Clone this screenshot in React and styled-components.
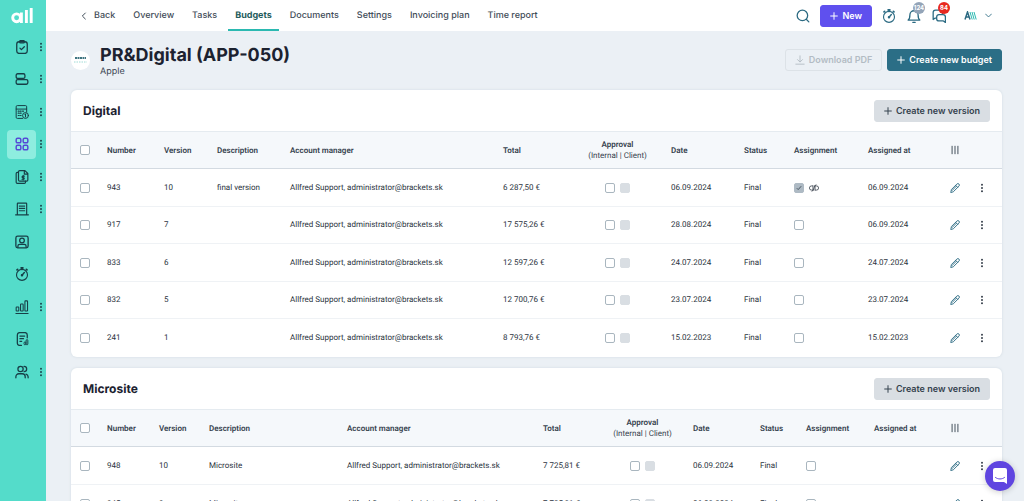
import React from 'react';
import styled, { createGlobalStyle } from 'styled-components';

const GlobalStyle = createGlobalStyle`
  * { box-sizing: border-box; }
  body {
    margin: 0;
    background: #ebf0f5;
    color: #2b3440;
    font-family: Inter, 'Liberation Sans', sans-serif;
    font-size: 8px;
    line-height: 12px;
    text-rendering: geometricPrecision;
  }
  button, input { font-family: inherit; margin: 0; }
  svg { display: block; }
`;

const Shell = styled.div`
  display: flex;
  height: 100vh;
  overflow: hidden;
`;

const Sidebar = styled.aside`
  flex: none;
  width: 46px;
  background: #54dcca;
  display: flex;
  flex-direction: column;
`;

const Brand = styled.a`
  display: flex;
  justify-content: center;
  flex: none;
  height: 30px;
  padding-top: 7px;
  padding-right: 3px;
`;

const SideRow = styled.div`
  display: flex;
  align-items: center;
  justify-content: space-between;
  flex: none;
  padding-left: 7px;
  height: ${p => (p.$short ? 32 : 33)}px;
`;

const SideLink = styled.a`
  display: flex;
  align-items: center;
  justify-content: center;
  width: 29px;
  height: 29px;
  border-radius: 4px;
  color: ${p => (p.$active ? '#5549d6' : '#173f47')};
  background: ${p => (p.$active ? '#8eeddf' : 'transparent')};
`;

const DotsButton = styled.button`
  display: flex;
  align-items: center;
  justify-content: center;
  width: ${p => p.$width || 10}px;
  height: 16px;
  padding: 0;
  border: 0;
  background: none;
  color: ${p => p.$color || '#173f47'};
`;

const Column = styled.div`
  flex: 1;
  min-width: 0;
  display: flex;
  flex-direction: column;
`;

const TopBar = styled.header`
  flex: none;
  display: flex;
  justify-content: space-between;
  height: 31px;
  padding: 0 32px 0 27px;
  background: #fff;
`;

const Tabs = styled.nav`
  display: flex;
  gap: 4px;
`;

const Tab = styled.a`
  display: flex;
  align-items: center;
  gap: 6px;
  padding: 2px 7px 0;
  border-bottom: 2px solid ${p => (p.$active ? '#2bb9b1' : 'transparent')};
  border-radius: 2px 2px 0 0;
  color: ${p => (p.$active ? '#1f5c5c' : '#3f4c58')};
  font-size: 9px;
  font-weight: ${p => (p.$active ? 700 : 500)};
  text-decoration: none;
  white-space: nowrap;
`;

const Tools = styled.div`
  display: flex;
  align-items: center;
  color: #2b6a82;
`;

const IconButton = styled.button`
  position: relative;
  display: flex;
  padding: 0;
  margin-left: ${p => p.$gap || 0}px;
  border: 0;
  background: none;
  color: inherit;
`;

const Badge = styled.span`
  position: absolute;
  top: -7px;
  left: 6px;
  min-width: 12px;
  height: 12px;
  border-radius: 6px;
  background: ${p => p.$color};
  color: #fff;
  font-size: 6px;
  font-weight: 700;
  line-height: 12px;
  text-align: center;
`;

const looks = {
  primary: 'background: #5f50ee; color: #fff; border-color: #5f50ee;',
  teal: 'background: #2b6e86; color: #fff; border-color: #2b6e86;',
  grey: 'background: #d9dee3; color: #35424e; border-color: #d9dee3;',
  ghost: 'background: transparent; color: #b3bcc4; border-color: #dce2e7;',
};

const Button = styled.button`
  display: flex;
  align-items: center;
  gap: 4px;
  height: 22px;
  padding: 0 9px;
  border: 1px solid;
  border-radius: 3px;
  font-size: 9px;
  font-weight: 600;
  line-height: 12px;
  white-space: nowrap;
  ${p => looks[p.$look]}
`;

const Main = styled.main`
  flex: 1;
  min-height: 0;
  overflow: auto;
  scrollbar-width: none;
  padding: 13px 22px 14px 25px;
`;

const PageHead = styled.div`
  display: flex;
  align-items: center;
  height: 32px;
  margin-bottom: 14px;
`;

const Avatar = styled.div`
  display: flex;
  align-items: center;
  justify-content: center;
  width: 19px;
  height: 19px;
  margin-right: 10px;
  border-radius: 50%;
  background: #fff;
`;

const Titles = styled.div`
  flex: 1;
  padding-top: 4px;
`;

const Title = styled.h1`
  margin: 0;
  color: #1c2230;
  font-size: 18px;
  font-weight: 700;
  line-height: 20px;
`;

const Client = styled.p`
  margin: 0;
  color: #3b4652;
  font-size: 9px;
  line-height: 12px;
`;

const Actions = styled.div`
  display: flex;
  gap: 5px;
`;

const Card = styled.section`
  margin-bottom: 11px;
  border-radius: 6px;
  background: #fff;
  box-shadow: 0 0 2px 1px #dfe6ec;
  overflow: hidden;
`;

const CardHead = styled.div`
  display: flex;
  align-items: center;
  justify-content: space-between;
  height: 42px;
  padding: 0 12px;
  border-bottom: 1px solid #e5ebf0;
`;

const CardTitle = styled.h2`
  margin: 0;
  color: #1c2230;
  font-size: 12px;
  font-weight: 700;
  line-height: 16px;
`;

const Table = styled.table`
  width: 100%;
  table-layout: fixed;
  border-collapse: separate;
  border-spacing: 0;
  font-family: Roboto, Inter, sans-serif;
`;

const HeadCell = styled.th`
  height: 37px;
  padding: 0 0 0 ${p => p.$pad || 0}px;
  border-bottom: 1px solid #d3dae1;
  background: #f5f8fb;
  color: #35424e;
  font-weight: 600;
  font-size: 8px;
  line-height: 11px;
  text-align: ${p => (p.$center ? 'center' : 'left')};
  white-space: nowrap;

  small {
    display: block;
    font-size: 8px;
    font-weight: 400;
  }
`;

const Row = styled.tr`
  height: 38px;

  &:nth-child(even) { height: 37px; }
  &:last-child td { border-bottom: 0; }
`;

const Cell = styled.td`
  padding: 0 0 0 ${p => p.$pad || 0}px;
  border-bottom: 1px solid #eff2f5;
  font-size: 8px;
  white-space: nowrap;
`;

const Inline = styled.div`
  display: flex;
  align-items: center;
  justify-content: ${p => (p.$center ? 'center' : 'flex-start')};
  gap: 5px;
`;

const Check = styled.input.attrs({ type: 'checkbox' })`
  appearance: none;
  display: block;
  width: 10px;
  height: 10px;
  border: 1px solid #a9b6bf;
  border-radius: 2px;
  background: #fff;

  &:disabled {
    border-color: #d9dee3;
    background: #d9dee3;
  }

  &:checked {
    border-color: #aebac4;
    background: #aebac4 url("data:image/svg+xml,%3Csvg xmlns='http://www.w3.org/2000/svg' viewBox='0 0 10 10' fill='none' stroke='%234a5763'%3E%3Cpath d='M2.8 5.2l1.4 1.4 3-3.4'/%3E%3C/svg%3E") center / 10px;
  }
`;

const Chat = styled.button`
  position: fixed;
  right: 9px;
  bottom: 10px;
  display: flex;
  align-items: center;
  justify-content: center;
  width: 30px;
  height: 30px;
  padding: 0;
  border: 0;
  border-radius: 50%;
  background: #5f45e0;
  box-shadow: 0 1px 6px rgba(0, 0, 0, 0.2);
`;

const Icon = ({ size = 14, box = 24, width = 2.2, children }) => (
  <svg
    width={size}
    height={size}
    viewBox={`0 0 ${box} ${box}`}
    fill="none"
    stroke="currentColor"
    strokeWidth={width}
    strokeLinecap="round"
    strokeLinejoin="round"
    aria-hidden="true"
  >
    {children}
  </svg>
);

const Plus = () => <Icon size={8} width={3}><path d="M12 2v20M2 12h20" /></Icon>;

const Dots = () => (
  <svg width="4" height="10" viewBox="0 0 4 10" fill="currentColor" aria-hidden="true">
    <circle cx="2" cy="1.8" r="0.95" />
    <circle cx="2" cy="5" r="0.95" />
    <circle cx="2" cy="8.2" r="0.95" />
  </svg>
);

const Stopwatch = ({ size }) => (
  <Icon size={size} width={1.9}>
    <circle cx="12" cy="13.5" r="9.4" />
    <path d="M12 14l4-4.5" strokeWidth="2.4" />
    <path d="M10.500 1.500h3M12 2v2M3.500 5l1-1M20.500 5l-1-1" strokeWidth="3" />
    <circle cx="12" cy="14" r="1.200" fill="currentColor" />
  </Icon>
);

const Pencil = () => (
  <Icon size={10}>
    <path d="M2 22l1.500-6.500L16.500 2.500a3 3 0 0 1 5 5L8.500 20.500zM13.500 5.500l5 5M5 18L15 8" />
  </Icon>
);

const sideItems = [
  {
    label: 'Tasks', menu: true,
    icon: <Icon>
      <rect x="3" y="3" width="18" height="20" rx="4" />
      <rect x="8" y="1" width="8" height="4" rx="1.5" />
      <path d="M8.500 14l2.500 2.500 5-5" />
    </Icon>,
  },
  {
    label: 'Planning', menu: true,
    icon: <Icon>
      <rect x="2" y="3" width="15" height="8" rx="2.5" />
      <rect x="2" y="13" width="20" height="8" rx="2.5" />
    </Icon>,
  },
  {
    label: 'Calculations', menu: true,
    icon: <Icon width={1.7}>
      <path d="M13 23H4a2 2 0 0 1-2-2V3a2 2 0 0 1 2-2h14a2 2 0 0 1 2 2v9M2 7h18" />
      <path d="M5.500 10.500h1.500M9 10.500h1.500M13 10.500h1.500M5.500 14h1.500M9 14h1.500M5.500 18h1.500M9 18h1.500" strokeWidth="2" />
      <circle cx="18" cy="18" r="5" />
      <path d="M18 15.500v5M17 16.500l1-1" />
    </Icon>,
  },
  {
    label: 'Projects', menu: true, active: true,
    icon: <Icon width={2.5}>
      <rect x="2" y="2" width="8" height="8" rx="2.5" />
      <rect x="14" y="2" width="8" height="8" rx="2.5" />
      <rect x="2" y="14" width="8" height="8" rx="2.5" />
      <rect x="14" y="14" width="8" height="8" rx="2.5" />
    </Icon>,
  },
  {
    label: 'Invoices', menu: true,
    icon: <Icon width={2}>
      <path d="M8 1h9l5 5v11a2 2 0 0 1-2 2H8a2 2 0 0 1-2-2V3a2 2 0 0 1 2-2zM16 1v6h6" />
      <path d="M6 4H4a2 2 0 0 0-2 2v15a2 2 0 0 0 2 2h12a2 2 0 0 0 2-2v-2" />
      <path d="M16 10.500h-2.500a1.300 1.300 0 0 0 0 2.700h1a1.300 1.300 0 0 1 0 2.700H12M14 9v8" />
    </Icon>,
  },
  {
    label: 'Companies', menu: true,
    icon: <Icon width={2}>
      <path d="M4 22V3a1 1 0 0 1 1-1h14a1 1 0 0 1 1 1v19M1 22h22" />
      <path d="M7.500 7h2M14.500 7h2M7.500 11h2M14.500 11h2M7.500 15h2M14.500 15h2M11 7h2M11 11h2M11 15h2" />
    </Icon>,
  },
  {
    label: 'Contacts',
    icon: <Icon>
      <rect x="1.5" y="2" width="21" height="20" rx="3" />
      <circle cx="12" cy="9.5" r="4" />
      <path d="M5 21v-2a3 3 0 0 1 3-3h8a3 3 0 0 1 3 3v2" />
    </Icon>,
  },
  { label: 'Time tracking', icon: <Stopwatch /> },
  {
    label: 'Statistics', menu: true,
    icon: <Icon width={1.8}>
      <rect x="2" y="12" width="4.5" height="7" rx="1" />
      <rect x="9.5" y="7" width="4.5" height="12" rx="1" />
      <rect x="17" y="1.5" width="4.5" height="17.5" rx="1" />
      <path d="M1.500 23h21" />
    </Icon>,
  },
  {
    label: 'Reports',
    icon: <Icon>
      <path d="M11 23H7a4 4 0 0 1-3-4V5a4 4 0 0 1 4-4h9a4 4 0 0 1 4 4v5M8.500 7h8M8.500 11.500h6M8.500 16h3" />
      <path d="M15.500 18.500a1.500 1.500 0 0 1 3 0v2a1.500 1.500 0 0 1-3 0zM19 14.500a1.500 1.500 0 0 1 3 0v6a1.500 1.500 0 0 1-3 0z" strokeWidth="1.7" />
    </Icon>,
  },
  {
    label: 'People', menu: true,
    icon: <Icon>
      <circle cx="9.5" cy="7" r="4.5" />
      <path d="M1.500 22v-2a5 5 0 0 1 5-5h6a5 5 0 0 1 5 5v2M15.500 2.500a4.500 4.500 0 0 1 0 9M19 15.500a5 5 0 0 1 3.500 4.500v2" />
    </Icon>,
  },
];

const tabs = ['Overview', 'Tasks', 'Budgets', 'Documents', 'Settings', 'Invoicing plan', 'Time report'];

const MANAGER = 'Allfred Support, administrator@brackets.sk';

const budgets = [
  {
    name: 'Digital',
    cols: [36, 57, 53, 73, 213, 61, 107, 73, 50, 74, 82, 30, 22],
    rows: [
      { number: 943, version: 10, description: 'final version', total: '6 287,50 €', date: '06.09.2024', assigned: true, assignedAt: '06.09.2024' },
      { number: 917, version: 7, total: '17 575,26 €', date: '28.08.2024', assignedAt: '06.09.2024' },
      { number: 833, version: 6, total: '12 597,26 €', date: '24.07.2024', assignedAt: '24.07.2024' },
      { number: 832, version: 5, total: '12 700,76 €', date: '23.07.2024', assignedAt: '23.07.2024' },
      { number: 241, version: 1, total: '8 793,76 €', date: '15.02.2023', assignedAt: '15.02.2023' },
    ],
  },
  {
    name: 'Microsite',
    cols: [36, 52, 50, 138, 196, 49, 101, 67, 46, 68, 76, 30, 22],
    rows: [
      { number: 948, version: 10, description: 'Microsite', total: '7 725,81 €', date: '06.09.2024' },
      { number: 945, version: 9, description: 'Microsite', total: '7 725,81 €', date: '06.09.2024' },
    ],
  },
];

function BudgetCard({ budget }) {
  return (
    <Card>
      <CardHead>
        <CardTitle>{budget.name}</CardTitle>
        <Button $look="grey"><Plus />Create new version</Button>
      </CardHead>
      <Table>
        <colgroup>
          {budget.cols.map((w, i) => <col key={i} width={w} />)}
        </colgroup>
        <thead>
          <tr>
            <HeadCell $pad={9}><Check aria-label="Select all" /></HeadCell>
            <HeadCell>Number</HeadCell>
            <HeadCell>Version</HeadCell>
            <HeadCell>Description</HeadCell>
            <HeadCell>Account manager</HeadCell>
            <HeadCell>Total</HeadCell>
            <HeadCell $center>Approval<small>(Internal | Client)</small></HeadCell>
            <HeadCell>Date</HeadCell>
            <HeadCell>Status</HeadCell>
            <HeadCell>Assignment</HeadCell>
            <HeadCell>Assigned at</HeadCell>
            <HeadCell>
              <IconButton aria-label="Columns">
                <Icon size={10}><path d="M5 3v18M12 3v18M19 3v18" /></Icon>
              </IconButton>
            </HeadCell>
            <HeadCell />
          </tr>
        </thead>
        <tbody>
          {budget.rows.map(row => (
            <Row key={row.number}>
              <Cell $pad={9}><Check aria-label={`Select ${row.number}`} /></Cell>
              <Cell>{row.number}</Cell>
              <Cell>{row.version}</Cell>
              <Cell>{row.description}</Cell>
              <Cell>{MANAGER}</Cell>
              <Cell>{row.total}</Cell>
              <Cell>
                <Inline $center>
                  <Check aria-label="Internal approval" />
                  <Check aria-label="Client approval" disabled />
                </Inline>
              </Cell>
              <Cell>{row.date}</Cell>
              <Cell>Final</Cell>
              <Cell>
                <Inline>
                  <Check aria-label="Assignment" defaultChecked={row.assigned} />
                  {row.assigned && (
                    <Icon size={10} width={1.8}>
                      <path d="M9 7H6a4 4 0 0 0 0 10h2.500M9.500 7v8a6 6 0 0 1-2 5M15 17h3a4 4 0 0 0 0-10h-2.500M14.500 17v-8a6 6 0 0 1 2-5M10 18l4-12" />
                    </Icon>
                  )}
                </Inline>
              </Cell>
              <Cell>{row.assignedAt}</Cell>
              <Cell>
                <Tools><IconButton aria-label="Edit"><Pencil /></IconButton></Tools>
              </Cell>
              <Cell><DotsButton $width={4} $color="#2b3440" aria-label="More"><Dots /></DotsButton></Cell>
            </Row>
          ))}
        </tbody>
      </Table>
    </Card>
  );
}

function App() {
  return (
    <>
      <GlobalStyle />
      <Shell>
        <Sidebar>
          <Brand href="#" aria-label="all">
            <svg width="22" height="17" viewBox="0 0 22 17" fill="none" stroke="#fff" strokeWidth="2.9">
              <circle cx="5.600" cy="10.800" r="3.9" />
              <path d="M10.400 5.500v10.500M15.400 3v13M20.200 1v15" />
            </svg>
          </Brand>
          {sideItems.map((item, i) => (
            <SideRow key={item.label} $short={i % 2 === 1}>
              <SideLink href="#" aria-label={item.label} $active={item.active}>{item.icon}</SideLink>
              {item.menu && <DotsButton aria-label={`${item.label} menu`}><Dots /></DotsButton>}
            </SideRow>
          ))}
        </Sidebar>
        <Column>
          <TopBar>
            <Tabs>
              <Tab href="#"><Icon size={8} width={3}><path d="M16 3l-9 9 9 9" /></Icon>Back</Tab>
              {tabs.map(t => <Tab key={t} href="#" $active={t === 'Budgets'}>{t}</Tab>)}
            </Tabs>
            <Tools>
              <IconButton aria-label="Search">
                <Icon><circle cx="11" cy="11" r="9" /><path d="M18 18l4 4" /></Icon>
              </IconButton>
              <IconButton as="div" $gap={10}>
                <Button $look="primary"><Plus />New</Button>
              </IconButton>
              <IconButton $gap={10} aria-label="Timer"><Stopwatch size={14} /></IconButton>
              <IconButton $gap={11} aria-label="Notifications">
                <Icon><path d="M2 19h20c-3-2-3-5-3-9a7 7 0 0 0-14 0c0 4 0 7-3 9zM10 23h4" /></Icon>
                <Badge $color="#93a4b8">124</Badge>
              </IconButton>
              <IconButton $gap={11} aria-label="Messages">
                <Icon>
                  <path d="M7 15.500H5.500L2 18V6a4 4 0 0 1 4-4h8a4 4 0 0 1 4 4v2" />
                  <path d="M12 9.500h7a4 4 0 0 1 4 4V23l-3.500-2.500H12a4 4 0 0 1-4-4v-3a4 4 0 0 1 4-4z" />
                </Icon>
                <Badge $color="#e8291f">84</Badge>
              </IconButton>
              <IconButton $gap={18} aria-label="Account">
                <svg width="13" height="9" viewBox="0 0 13 9" fill="none">
                  <path d="M1 8.500L3.500 1l2.500 7.500M1.800 6h3.600" stroke="#2b6a82" strokeWidth="1.5" />
                  <path d="M6 1l2.200 7.500M8 1l2.200 7.500M10 1l2.200 7.500" stroke="#2bb9b1" strokeWidth="1" />
                </svg>
              </IconButton>
              <IconButton $gap={8} aria-label="Account menu">
                <Icon size={7} width={3}><path d="M2 7l10 10L22 7" /></Icon>
              </IconButton>
            </Tools>
          </TopBar>
          <Main>
            <PageHead>
              <Avatar>
                <svg width="13" height="8" viewBox="0 0 13 8" fill="none">
                  <path d="M1 2h11" stroke="#3f7480" strokeWidth="2" strokeDasharray="2 0.5" />
                  <path d="M0 6h13" stroke="#9edbd6" strokeDasharray="1.5 1" />
                </svg>
              </Avatar>
              <Titles>
                <Title>PR&amp;Digital (APP-050)</Title>
                <Client>Apple</Client>
              </Titles>
              <Actions>
                <Button $look="ghost" disabled>
                  <Icon size={10}><path d="M12 2v14M6 11l6 6 6-6M2 22h20" /></Icon>
                  Download PDF
                </Button>
                <Button $look="teal"><Plus />Create new budget</Button>
              </Actions>
            </PageHead>
            {budgets.map(b => <BudgetCard key={b.name} budget={b} />)}
          </Main>
        </Column>
      </Shell>
      <Chat aria-label="Open chat">
        <svg width="14" height="16" viewBox="0 0 14 16" fill="none">
          <path d="M2 0h10a2 2 0 0 1 2 2v14l-3-2H2a2 2 0 0 1-2-2V2a2 2 0 0 1 2-2z" fill="#fff" />
          <path d="M2.500 9.500c2.500 2 6.500 2 9 0" stroke="#5f45e0" strokeLinecap="round" />
        </svg>
      </Chat>
    </>
  );
}

export default App;
